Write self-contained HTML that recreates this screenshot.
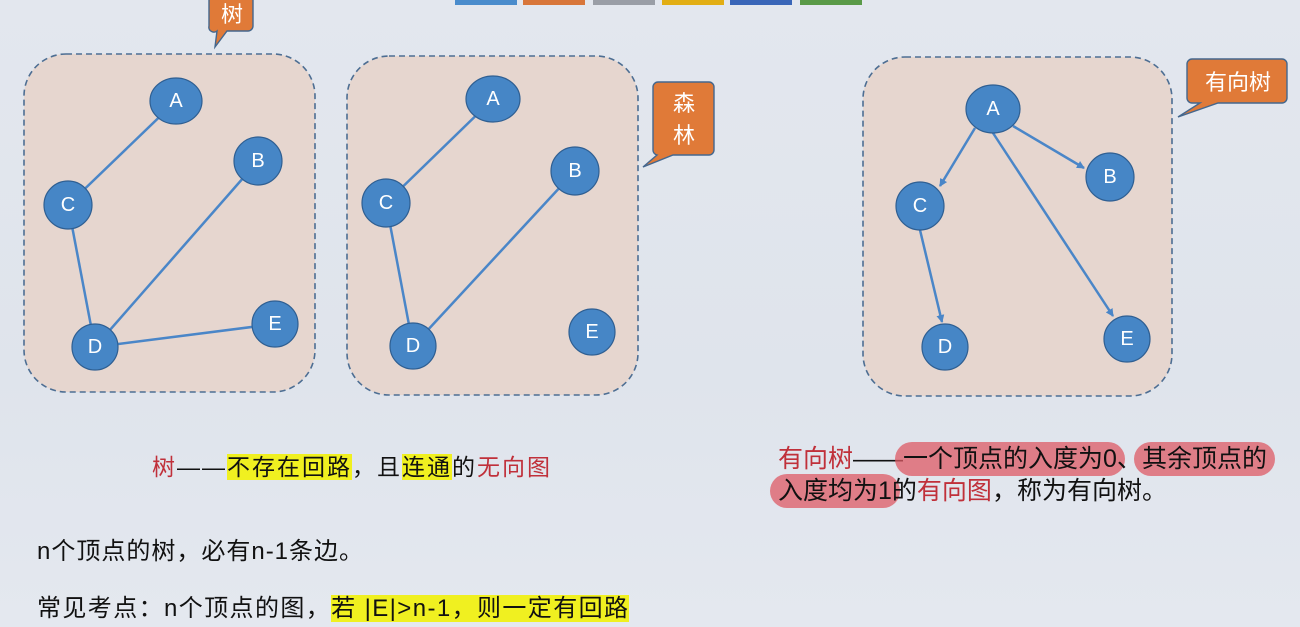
<!DOCTYPE html>
<html><head><meta charset="utf-8"><style>
body{margin:0;width:1300px;height:627px;overflow:hidden;background:linear-gradient(180deg,#e3e7ee 0%,#dfe4ec 60%,#e4e8ef 100%);font-family:"Liberation Sans","Noto Sans CJK SC",sans-serif;position:relative}
.t{position:absolute;white-space:nowrap;color:#111}
.r{color:#c0303a}
.y{background:#f0f020}
.p{background:rgba(222,90,100,.75);border-radius:20px;padding:3px 8px;margin:0 -8px}
</style></head><body>
<svg width="1300" height="627" style="position:absolute;left:0;top:0" font-family="Liberation Sans, sans-serif">
<defs><marker id="ar" markerWidth="8" markerHeight="8" refX="7" refY="4" orient="auto" markerUnits="userSpaceOnUse"><path d="M0,0 L8,4 L0,8 z" fill="#4a86c8"/></marker></defs>
<rect x="455" y="-4" width="62" height="9" fill="#4a8ccc"/>
<rect x="523" y="-4" width="62" height="9" fill="#d8763a"/>
<rect x="593" y="-4" width="62" height="9" fill="#9a9ea6"/>
<rect x="662" y="-4" width="62" height="9" fill="#e2ae14"/>
<rect x="730" y="-4" width="62" height="9" fill="#3a66b8"/>
<rect x="800" y="-4" width="62" height="9" fill="#5a9a48"/>
<g fill="#e6d6cf" stroke="#4d6e93" stroke-width="1.6" stroke-dasharray="6,4">
<rect x="24" y="54" width="291" height="338" rx="42"/>
<rect x="347" y="56" width="291" height="339" rx="42"/>
<rect x="863" y="57" width="309" height="339" rx="42"/>
</g>
<g stroke="#4a86c8" stroke-width="2.5">
<line x1="176" y1="101" x2="68" y2="205"/><line x1="258" y1="161" x2="95" y2="347"/><line x1="68" y1="205" x2="95" y2="347"/><line x1="95" y1="347" x2="275" y2="324"/>
<line x1="493" y1="99" x2="386" y2="203"/><line x1="386" y1="203" x2="413" y2="346"/><line x1="413" y1="346" x2="575" y2="171"/>
</g>
<g stroke="#4a86c8" stroke-width="2.5" marker-end="url(#ar)">
<line x1="975" y1="128" x2="940" y2="186"/><line x1="1013" y1="126" x2="1084" y2="168"/><line x1="993" y1="133" x2="1113" y2="316"/><line x1="920" y1="230" x2="942" y2="322"/>
</g>
<g fill="#4686c6" stroke="#2f5f92" stroke-width="1.2">
<ellipse cx="176" cy="101" rx="26" ry="23"/><circle cx="258" cy="161" r="24"/><circle cx="68" cy="205" r="24"/><circle cx="95" cy="347" r="23"/><circle cx="275" cy="324" r="23"/>
<ellipse cx="493" cy="99" rx="27" ry="23"/><circle cx="575" cy="171" r="24"/><circle cx="386" cy="203" r="24"/><circle cx="413" cy="346" r="23"/><circle cx="592" cy="332" r="23"/>
<ellipse cx="993" cy="109" rx="27" ry="24"/><circle cx="1110" cy="177" r="24"/><circle cx="920" cy="206" r="24"/><circle cx="945" cy="347" r="23"/><circle cx="1127" cy="339" r="23"/>
</g>
<g fill="#fff" font-size="20" text-anchor="middle" dominant-baseline="central">
<text x="176" y="101">A</text><text x="258" y="161">B</text><text x="68" y="205">C</text><text x="95" y="347">D</text><text x="275" y="324">E</text>
<text x="493" y="99">A</text><text x="575" y="171">B</text><text x="386" y="203">C</text><text x="413" y="346">D</text><text x="592" y="332">E</text>
<text x="993" y="109">A</text><text x="1110" y="177">B</text><text x="920" y="206">C</text><text x="945" y="347">D</text><text x="1127" y="339">E</text>
</g>
<g fill="#e07a38" stroke="#44678e" stroke-width="1.4">
<path d="M215,-5 h33 a5,5 0 0 1 5,5 v26 a5,5 0 0 1 -5,5 h-21 l-12,16 l2,-16 a5,5 0 0 1 -8,-5 v-26 z"/>
<path d="M658,82 h51 a5,5 0 0 1 5,5 v63 a5,5 0 0 1 -5,5 h-36 l-30,12 l14,-12 h-0 a5,5 0 0 1 -4,-5 v-63 a5,5 0 0 1 5,-5 z"/>
<path d="M1192,59 h90 a5,5 0 0 1 5,5 v34 a5,5 0 0 1 -5,5 h-64 l-40,14 l22,-14 h-8 a5,5 0 0 1 -5,-5 v-34 a5,5 0 0 1 5,-5 z"/>
</g>
<g fill="#fff" font-family="Liberation Sans, Noto Sans CJK SC, sans-serif" font-size="22" text-anchor="middle">
<text x="232" y="22">树</text><text x="684" y="111">森</text><text x="684" y="143">林</text><text x="1238" y="90">有向树</text>
</g>
</svg>
<div class="t" style="left:152px;top:448px;font-size:23px;letter-spacing:2px"><span class="r">树</span>——<span class="y">不存在回路</span>，且<span class="y">连通</span>的<span class="r">无向图</span></div>
<div class="t" style="left:778px;top:443px;font-size:25px;line-height:32px"><span class="r">有向树</span>——<span class="p">一个顶点的入度为0</span>、<span class="p">其余顶点的</span><br><span class="p">入度均为1</span>的<span class="r">有向图</span>，称为有向树。</div>
<div class="t" style="left:37px;top:531px;font-size:24px;letter-spacing:1px">n个顶点的树，必有n-1条边。</div>
<div class="t" style="left:37px;top:588px;font-size:24px;letter-spacing:1.4px">常见考点：n个顶点的图，<span class="y">若 |E|&gt;n-1，则一定有回路</span></div>
</body></html>
